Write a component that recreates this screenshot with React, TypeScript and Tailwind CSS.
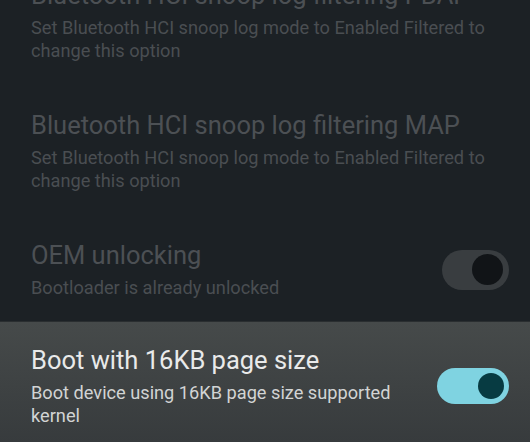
import React from "react";

function Toggle({ on }: { on: boolean }) {
  if (on) {
    return (
      <div className="shrink-0 w-[72px] h-[36px] rounded-full bg-[#7fd3e1] flex items-center justify-end pr-[5px]">
        <div className="w-[26px] h-[26px] rounded-full bg-[#073b42]" />
      </div>
    );
  }
  return (
    <div className="shrink-0 w-[67px] h-[40px] rounded-full bg-[#393d40] flex items-center justify-end pr-[6px]">
      <div className="w-[31px] h-[31px] rounded-full bg-[#111417]" />
    </div>
  );
}

function Row({
  title,
  subtitle,
  toggle,
  enabled,
  className,
}: {
  title: string;
  subtitle: string;
  toggle?: boolean;
  enabled?: boolean;
  className?: string;
}) {
  return (
    <div className={"flex items-center pl-[31px] pr-[21px] gap-[24px] " + (className ?? "")}>
      <div className="flex-1 min-w-0">
        <div
          className={
            "text-[25.5px] leading-[30px] whitespace-nowrap " +
            (enabled ? "text-[#e9eaea]" : "text-[#4c5054]")
          }
        >
          {title}
        </div>
        <div
          className={
            "mt-[6px] text-[18.2px] leading-[23px] " +
            (enabled ? "text-[#d2d4d4]" : "text-[#4a4e52]")
          }
        >
          {subtitle}
        </div>
      </div>
      {toggle !== undefined && <Toggle on={toggle} />}
    </div>
  );
}

export default function App() {
  return (
    <div
      className="w-[530px] h-[442px] overflow-hidden bg-[#1c2125]"
      style={{ fontFamily: "Roboto, 'Open Sans', sans-serif" }}
    >
      <div className="mt-[-44px]">
        <Row
          className="py-[24px]"
          title="Bluetooth HCI snoop log filtering PBAP"
          subtitle="Set Bluetooth HCI snoop log mode to Enabled Filtered to change this option"
        />
        <Row
          className="py-[24px]"
          title="Bluetooth HCI snoop log filtering MAP"
          subtitle="Set Bluetooth HCI snoop log mode to Enabled Filtered to change this option"
        />
        <Row
          className="pt-[24px] pb-[22px]"
          title="OEM unlocking"
          subtitle="Bootloader is already unlocked"
          toggle={false}
        />
        <div className="bg-gradient-to-b from-[#464a4a] to-[#363a3c] border-t border-[#2a2e30]">
          <Row
            className="pt-[23px] pb-[24px]"
            title="Boot with 16KB page size"
            subtitle="Boot device using 16KB page size supported kernel"
            toggle={true}
            enabled
          />
        </div>
      </div>
    </div>
  );
}
